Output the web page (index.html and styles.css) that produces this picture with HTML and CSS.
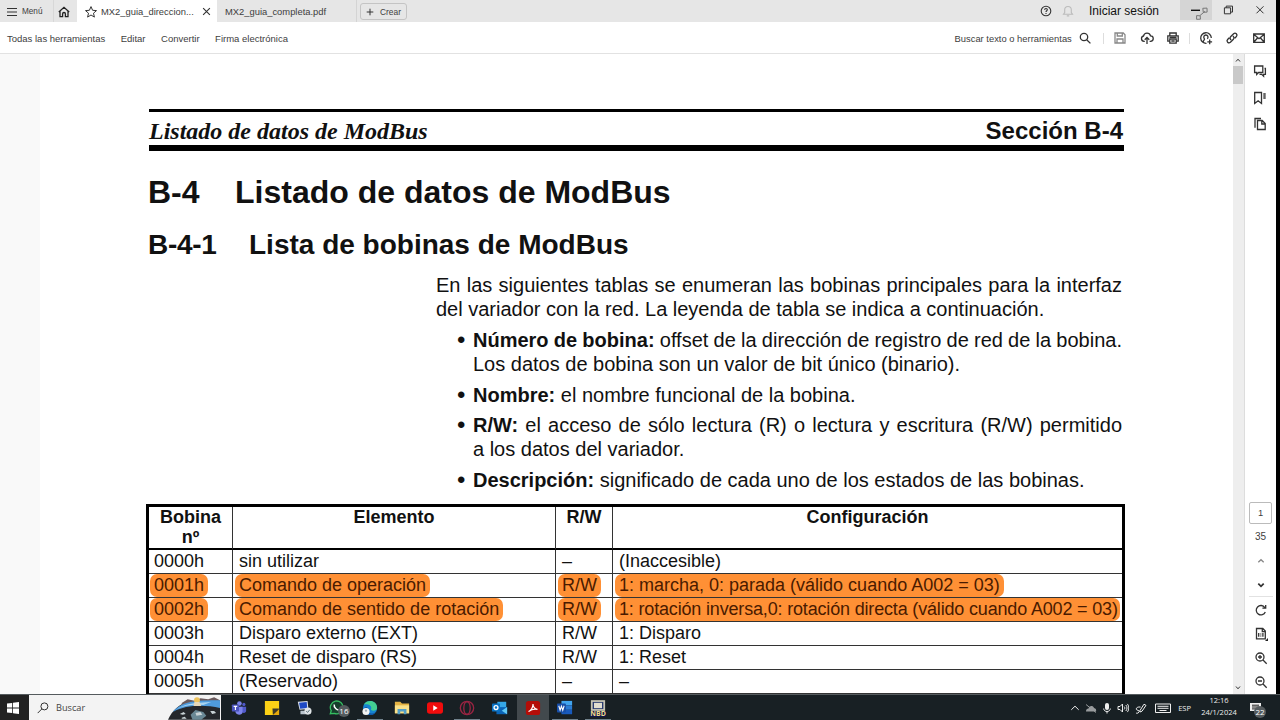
FILE: index.html
```html
<!DOCTYPE html>
<html lang="es">
<head>
    <meta charset="UTF-8">
    <title>MX2_guia_direcciones.pdf</title>
    <link rel="stylesheet" href="styles.css">
</head>
<body>
    <div class="viewer">
        <!-- Tabs and window buttons -->
        <div class="titlebar">
            <div class="menu">
                <svg class="burger" viewBox="0 0 10 10"><path d="M0 1.5h10M0 5h10M0 8.5h10"/></svg>
                <span>Menú</span>
            </div>
            <div class="home">
                <svg class="icon" viewBox="0 0 14 14"><path d="M1.8 7 7 2.3 12.2 7M3 6.2v5.5h2.6V8.900a1.400 1.400 0 0 1 2.800 0v2.800H11V6.200"/></svg>
            </div>
            <div class="tab active">
                <svg class="icon star" viewBox="0 0 14 14"><path d="M7 1.6 8.6 5.3l3.9.3-3 2.6.9 3.9L7 10l-3.4 2.1.9-3.9-3-2.6 3.9-.3z"/></svg>
                <span class="name">MX2_guia_direccion...</span>
                <svg class="tab-close" viewBox="0 0 8 8"><path d="M1 1l6 6M7 1 1 7"/></svg>
            </div>
            <div class="tab"><span>MX2_guia_completa.pdf</span></div>
            <div class="create"><svg viewBox="0 0 8 8"><path d="M4 .7v6.6M.7 4h6.6"/></svg>Crear</div>

            <div class="account">
                <svg class="icon" viewBox="0 0 14 14"><circle cx="7" cy="7" r="4.8"/><path d="M5.6 5.9C5.7 4 8.5 4.2 8.3 5.9 8.2 6.7 7 6.8 7 7.9M7 9.1v.9"/></svg>
                <svg class="icon pale" viewBox="0 0 14 14"><path d="M2.5 10.3h9L10.3 8.6V5.8a3.3 3.3 0 0 0-6.6 0v2.8zM5.8 11.9h2.4"/></svg>
                <span>Iniciar sesión</span>
            </div>
            <div class="win-btn hover">
                <svg viewBox="0 0 32 22"><path class="dash" d="M11 10.3h9"/><path class="cursor" d="M20 15.5 25 11.3M16.6 15.6l3.6.2.2 3.4-3.8.1zM22.8 8.3l4.2-.2.1 4-3.8.2z"/></svg>
            </div>
            <div class="win-btn"><svg viewBox="0 0 32 22"><path d="M12.4 7.8h6.2v6H12.4zM14.2 7.8V6.1h6.3v6h-1.9"/></svg></div>
            <div class="win-btn"><svg viewBox="0 0 32 22"><path d="M12.5 6.3l7 7M19.5 6.3l-7 7"/></svg></div>
        </div>

        <div class="toolbar">
            <span>Todas las herramientas</span>
            <span>Editar</span>
            <span>Convertir</span>
            <span>Firma electrónica</span>
            <div class="tools">
                <span>Buscar texto o herramientas</span>
                <svg class="icon search" viewBox="0 0 14 14"><circle cx="6" cy="6" r="3.7"/><path d="M8.7 8.7l3.7 3.7"/></svg>
                <i></i>
                <svg class="icon grey" viewBox="0 0 14 14"><path d="M2 2h8.3L12 3.7V12H2zM4.3 2v3h5V2M4 12V8h6v4"/></svg>
                <svg class="icon" viewBox="0 0 14 14"><path d="M4.8 10.3H4a2.7 2.7 0 0 1-.5-5.3 3.6 3.6 0 0 1 7-.2 2.7 2.7 0 0 1 0 5.5h-.9M7 13V6.6M4.7 8.8 7 6.5l2.3 2.3"/></svg>
                <svg class="icon" viewBox="0 0 14 14"><path d="M3.8 4.5V2h6.4v2.5M3.5 10.2H1.8V4.8h10.4v5.4h-1.7M3.8 8h6.4v4.2H3.8zM3.5 6.4h7M5.3 10h3.4"/></svg>
                <i></i>
                <svg class="icon" viewBox="0 0 14 14"><path d="M7.500 12.300A5.300 5.300 0 1 1 12.300 7M4.200 10.800c.2-1.500 1.200-1.800 1.300-2.600C4 6.200 5 4 6.900 4s2.800 1.900 1.500 3.800M10.700 8.500v4.800M8.300 10.900h4.800"/></svg>
                <svg class="icon" viewBox="0 0 14 14"><path d="M6.200 8.900C4.700 7.800 4.800 6.500 5.800 5.500L8.600 2.700c1.900-1.700 4.500.9 2.800 2.800L9.700 7.200M7.800 5.100c1.500 1.100 1.400 2.400.4 3.400l-2.800 2.800c-1.900 1.700-4.500-.9-2.800-2.800L4.300 6.800"/></svg>
                <svg class="icon" viewBox="0 0 14 14"><path d="M1.700 3h10.600v8.300H1.700zM2 3.400l5 4.300 5-4.300M2 11l3.500-4M12 11 8.500 7"/></svg>
            </div>
        </div>

        <div class="workspace">
            <div class="page">
                <div class="page-header">
                    <em>Listado de datos de ModBus</em>
                    <strong>Sección B-4</strong>
                </div>
                <h1><span>B-4</span>Listado de datos de ModBus</h1>
                <h2><span>B-4-1</span>Lista de bobinas de ModBus</h2>
                <div class="intro">
                    <p class="line">En las siguientes tablas se enumeran las bobinas principales para la interfaz</p>
                    <p>del variador con la red. La leyenda de tabla se indica a continuación.</p>
                    <ul>
                        <li><p class="line tight"><b>Número de bobina:</b> offset de la dirección de registro de red de la bobina.</p><p>Los datos de bobina son un valor de bit único (binario).</p></li>
                        <li><p><b>Nombre:</b> el nombre funcional de la bobina.</p></li>
                        <li><p class="line"><b>R/W:</b> el acceso de sólo lectura (R) o lectura y escritura (R/W) permitido</p><p>a los datos del variador.</p></li>
                        <li><p><b>Descripción:</b> significado de cada uno de los estados de las bobinas.</p></li>
                    </ul>
                </div>
                <table>
                    <colgroup><col class="c-num"><col class="c-elem"><col class="c-rw"><col class="c-conf"></colgroup>
                    <tr><th>Bobina<br>nº</th><th>Elemento</th><th>R/W</th><th>Configuración</th></tr>
                    <tr><td>0000h</td><td>sin utilizar</td><td>–</td><td>(Inaccesible)</td></tr>
                    <tr><td><mark>0001h</mark></td><td><mark>Comando de operación</mark></td><td><mark>R/W</mark></td><td><mark>1: marcha, 0: parada (válido cuando A002 = 03)</mark></td></tr>
                    <tr><td><mark>0002h</mark></td><td><mark>Comando de sentido de rotación</mark></td><td><mark>R/W</mark></td><td><mark class="long">1: rotación inversa,0: rotación directa (válido cuando A002 = 03)</mark></td></tr>
                    <tr><td>0003h</td><td>Disparo externo (EXT)</td><td>R/W</td><td>1: Disparo</td></tr>
                    <tr><td>0004h</td><td>Reset de disparo (RS)</td><td>R/W</td><td>1: Reset</td></tr>
                    <tr><td>0005h</td><td>(Reservado)</td><td>–</td><td>–</td></tr>
                </table>
            </div>

            <div class="scrollbar">
                <svg viewBox="0 0 10 10"><path d="M3 6.500 5 4.200l2 2.300"/></svg>
                <div class="thumb"></div>
                <svg class="down" viewBox="0 0 10 10"><path d="M3 3.500 5 5.800l2-2.300"/></svg>
            </div>

            <div class="rail">
                <div class="panels">
                    <svg class="icon" viewBox="0 0 14 14"><path d="M1.600 2h8.200v6.500H5.600L3.700 10.400V8.500H1.600zM11.500 4.500h.9v5.900h-1.800v1.800l-1.900-1.800H6.500"/></svg>
                    <svg class="icon" viewBox="0 0 14 14"><path d="M1.700 1.500h6.800v11L5.100 9.800l-3.400 2.700zM10.300 3h2.400M10.300 5h2.400M10.300 7h2.400"/></svg>
                    <svg class="icon" viewBox="0 0 14 14"><path d="M4.500 3.500h4.700l3 3v6H4.500zM8.800 3.500V7h3.400M2 10.800V1.500h6"/></svg>
                </div>
                <div class="nav">
                    <div class="current">1</div>
                    <div class="total">35</div>
                    <svg class="icon grey" viewBox="0 0 14 14"><path d="M4.300 8.300 7 5.700l2.700 2.600"/></svg>
                    <svg class="icon thick" viewBox="0 0 14 14"><path d="M4.300 5.700 7 8.300l2.700-2.600"/></svg>
                    <hr>
                    <svg class="icon" viewBox="0 0 14 14"><path d="M10.800 4.500A4.700 4.700 0 1 0 11.300 9M11.700 2v3.200H8.400"/></svg>
                    <svg class="icon" viewBox="0 0 14 14"><path d="M2.500 1.500h6.300l2.500 2.500v7.800H2.500zM8.300 2v2.700h2.900M4.700 6v3.700M8.900 6v3.700M6.800 6.500v.9M6.800 8.500v.9"/><path class="solid" d="M14 11v3h-3z"/></svg>
                    <svg class="icon" viewBox="0 0 14 14"><circle cx="6" cy="6" r="4"/><path d="M9 9l3.700 3.700M4 6h4M6 4v4"/></svg>
                    <svg class="icon" viewBox="0 0 14 14"><circle cx="6" cy="6" r="4"/><path d="M9 9l3.700 3.700M4 6h4"/></svg>
                </div>
            </div>
        </div>
    </div>

    <!-- Windows taskbar -->
    <div class="taskbar">
        <div class="start"><svg viewBox="0 0 12 12"><path d="M0 1.600 5.200.9v4.700H0zM6 .8 12 0v5.600H6zM0 6.400h5.200v4.700L0 10.400zM6 6.400h6V12l-6-.8z"/></svg></div>
        <div class="searchbox">
            <svg class="lens" viewBox="0 0 12 12"><circle cx="7.400" cy="4.400" r="3.500"/><path d="M4.900 6.900.7 11.100"/></svg>
            <span>Buscar</span>
            <svg class="art" viewBox="0 0 54 25">
                <path fill="#25272b" d="M0 25C4 16 12 8 21 7L53 6v19z"/>
                <path fill="#6b5a5c" d="M14 8l6-4 8 2 5-3 8 1 6-2 6 3v5H14z"/>
                <path fill="#4f9bdc" d="M5 17C13 6 29 5 53 5v8C38 10 20 9 5 17z"/>
                <path fill="#a9d4f1" d="M9 14C21 7 32 8 44 7L36 10C25 9 18 10 9 14z"/>
                <circle fill="#edc25b" cx="29.500" cy="5" r="3"/>
                <path fill="#e5d7b9" d="M27 7h5l2 4h-8z"/>
                <path fill="#6a8895" d="M23 20l5-5 8 2 3 4-5 4h-9z"/>
                <path fill="#c9d2d5" d="M28 18l5-1 2 3-6 1zM12 19l4-2 2 2-3 1zM43 16l4 0 2 2-4 1zM14 23l3-1 2 2h-5z"/>
            </svg>
        </div>
        <div class="apps">
            <div class="app"><svg viewBox="0 0 18 18"><circle fill="#7b83eb" cx="9.500" cy="4" r="2.600"/><circle fill="#5059c9" cx="14.500" cy="5" r="1.800"/><path fill="#5059c9" d="M11 7.500h6v5c0 2-3 3-5 1z"/><path fill="#7b83eb" d="M5 7.500h8v6c0 4-7 4-8 0z"/><rect fill="#4b53bc" x="1" y="5" width="8" height="8" rx="1"/><path stroke="#fff" stroke-width="1.300" d="M3 7.200h4M5 7.200v4"/></svg></div>
            <div class="app"><svg viewBox="0 0 18 18"><path fill="#fcd116" d="M1 1h16v9h-6.500v7H1z"/><path fill="#3d3a2a" d="M9.500 9.500H17L10 17z"/><path fill="#e3a70c" d="M17 10v7h-7z"/></svg></div>
            <div class="app"><svg viewBox="0 0 18 18"><path fill="#dde4ed" d="M2 2l11-1 1 9-10 1z"/><path fill="#1d49c5" d="M3.500 3l8.500-.7.700 6.700-8 .8z"/><path fill="#bac4cd" d="M5 12h6l2 4H5z"/><circle fill="#e1e5e8" cx="13.500" cy="12.500" r="4"/><path stroke="#49616b" fill="none" d="M11.500 12.500l1.500 1.500 2.500-3"/></svg></div>
            <div class="app"><svg viewBox="0 0 18 18"><path fill="#153e2b" stroke="#35bd61" stroke-width="1.500" d="M1.500 15.500 2.500 12A7.200 7.200 0 1 1 6 15z"/><path fill="none" stroke="#fff" stroke-width="1.700" d="M6 5c-1 3 3 7 6 6"/></svg><span class="badge">16</span></div>
            <div class="app open"><svg viewBox="0 0 18 18"><circle fill="#1683d1" cx="9" cy="9" r="8"/><path fill="#43cf92" d="M2 5C6-1 17 0 17 9c0 3-5 4-7 2 2-5-3-7-8-6z"/><path fill="#0f57a8" d="M6 8c-2 6 4 9 9 6-2 4-9 4-12 0C1 10 3 7 6 8z"/><circle fill="#f3f3f3" cx="4.500" cy="13" r="4"/><circle fill="#a1aeb8" cx="4.500" cy="12" r="1.300"/></svg></div>
            <div class="app"><svg viewBox="0 0 18 18"><path fill="#e4b344" d="M1 2h6l2 2h8v11H1z"/><path fill="#fae18a" d="M1 6h16v9H1z"/><path fill="#539ec6" d="M4 10h10v6h-3v-3H7v3H4z"/></svg></div>
            <div class="app"><svg viewBox="0 0 18 18"><rect fill="#f10c0c" y="2.500" width="18" height="13" rx="3"/><path fill="#fff" d="M7 6l5 3-5 3z"/></svg></div>
            <div class="app open"><svg viewBox="0 0 18 18"><circle fill="none" stroke="#992442" stroke-width="1.500" cx="9" cy="9" r="7.500"/><ellipse fill="none" stroke="#992442" stroke-width="1.500" cx="9" cy="9" rx="3.600" ry="7"/></svg></div>
            <div class="app"><svg viewBox="0 0 18 18"><path fill="#35a8e7" d="M6 2h10v8H6z"/><path fill="#0a65b8" d="M5 8h12v8H5z"/><path fill="#61c9f5" d="M17 8v8l-6-4z"/><rect fill="#0872c5" y="4" width="9" height="9" rx="1"/><circle fill="none" stroke="#fff" stroke-width="1.500" cx="4.500" cy="8.500" r="2.200"/></svg></div>
            <div class="app current-app"><svg viewBox="0 0 18 18"><rect fill="#b40d08" x="1" y="1" width="16" height="16" rx="3"/><path fill="none" stroke="#fff" stroke-width="1.300" d="M4 13C7 12 9 8 9 4.500c0 3 2 6 5 6-3-.6-7 .2-10 2.500z"/></svg></div>
            <div class="app open"><svg viewBox="0 0 18 18"><path fill="#41a5ee" d="M5 1h12v5H5z"/><path fill="#2b7cd3" d="M5 6h12v5H5z"/><path fill="#185abd" d="M5 11h12v5H5z"/><rect fill="#174ea8" y="4" width="10" height="10" rx="1"/><path fill="none" stroke="#fff" stroke-width="1.200" d="M2 6.500l1.500 5L5 7l1.500 4.500 1.500-5"/></svg></div>
            <div class="app open nbd"><svg viewBox="0 0 18 12"><rect fill="#c6c4b4" x="1" width="16" height="12"/><rect fill="#293b70" x="3" y="2" width="12" height="8"/><rect fill="#e2ded0" x="4.500" y="3" width="9" height="6"/></svg><b>NBD</b></div>
        </div>
        <div class="tray">
            <svg viewBox="0 0 12 12"><path d="M2.300 7.800 6 4.200l3.700 3.600"/></svg>
            <svg class="dim" viewBox="0 0 12 12"><path class="fill" d="M1 9.500c0-2 1-3 2.500-3C4 3.500 8 3 9 6c2 .4 2.500 2 2 3.500z"/><path d="M1 2.500l10 8"/></svg>
            <svg viewBox="0 0 12 12"><rect class="fill" x="4" y="1" width="4" height="7" rx="2"/><path d="M2.700 6.500c0 4 6.600 4 6.600 0M6 9.500v2"/></svg>
            <svg viewBox="0 0 12 12"><path d="M1 4.500h2L5.500 2v8L3 7.500H1zM7.200 4.600c.8.900.8 2 0 2.800M8.800 3c1.600 1.800 1.600 4.200 0 6M10.300 1.900c2 2.500 2 5.700 0 8.200"/></svg>
            <svg class="pen" viewBox="0 0 12 12"><path d="M5 8.500 9 2.200l2 1.200L7 9.200l-2 .8zM5.500 5C2 4.500 0 7 2 8s3 0 2 2-3 1-3 1"/></svg>
            <svg class="keyboard" viewBox="0 0 18 12"><path d="M1.500 2h15v8.500h-15zM3.500 4.300h11M3.500 6.300h11M5.500 8.500h7"/></svg>
            <span>ESP</span>
            <div class="clock">12:16<br>24/1/2024</div>
            <div class="notices"><svg viewBox="0 0 12 12"><path class="fill" d="M0 1h11v8H7l-2.500 2V9H0z"/><path class="rows" d="M2 3.200h7M2 5h7M2 6.900h5"/></svg><span class="badge">22</span></div>
        </div>
    </div>
</body>
</html>
```

FILE: styles.css
```css
* {
    box-sizing: border-box;
}

body {
    margin: 0;
    width: 1280px;
    height: 720px;
    overflow: hidden;
    background-color: #000;
    font-family: "Liberation Sans", Arial, sans-serif;
    color: #111;
}

svg {
    display: block;
    flex: none;
    fill: none;
    stroke: #333;
    stroke-width: 1;
}

p, h1, h2, ul {
    margin: 0;
    padding: 0;
}

.icon {
    width: 14px;
    height: 14px;
    stroke-width: 1.3;
}

.icon.pale {
    stroke: #bbb;
}

.icon.grey {
    stroke: #888;
}

.icon.thick {
    stroke-width: 1.8;
}

.icon .solid {
    fill: #222;
    stroke: none;
}

.viewer {
    width: 1276px;
    height: 694px;
    overflow: hidden;
    background-color: #fff;
    font-size: 9.4px;
    color: #404040;
}

/* Title bar */
.titlebar {
    display: flex;
    height: 22px;
    background-color: #e6e6e6;
}

.menu {
    display: flex;
    align-items: center;
    gap: 5px;
    width: 54px;
    padding: 1px 0 0 7px;
    font-size: 8.2px;
    border-right: 1px solid #d8d8d8;
}

.burger {
    width: 10px;
    height: 10px;
}

.home {
    width: 23px;
    padding: 5px 0 0 3px;
}

.home .icon {
    stroke: #222;
}

.tab {
    display: flex;
    align-items: center;
    width: 140px;
    height: 22px;
    padding: 1px 0 0 8px;
    border-right: 1px solid #d4d4d4;
}

.tab.active {
    padding-left: 7px;
    background-color: #fff;
    border-right: none;
}

.tab .name {
    width: 101px;
    margin-left: 3px;
}

.star {
    stroke-width: 1;
}

.tab-close {
    width: 9px;
    height: 9px;
}

.create {
    display: flex;
    align-items: center;
    gap: 6px;
    width: 47px;
    height: 17px;
    margin: 3px 0 0 3px;
    padding-left: 5px;
    border: 1px solid #c4c4c4;
    border-radius: 3px;
    font-size: 8.4px;
}

.create svg {
    width: 8px;
    height: 8px;
}

.account {
    display: flex;
    align-items: center;
    margin-left: auto;
    margin-right: 21px;
    font-size: 12px;
    color: #111;
}

.account .icon {
    stroke-width: 1.1;
}

.account .pale {
    margin: 0 14px 0 8px;
}

.win-btn {
    width: 32px;
    height: 22px;
}

.win-btn.hover {
    height: 20px;
    background-color: #d5d5d5;
}

.win-btn svg {
    width: 32px;
    height: 22px;
}

.dash {
    stroke: #111;
    stroke-width: 1.4;
}

.cursor {
    stroke: #777;
}

/* Toolbar */
.toolbar {
    display: flex;
    align-items: center;
    gap: 15.5px;
    height: 32px;
    padding: 1px 10px 0 7px;
    border-bottom: 1px solid #e2e2e2;
    font-size: 9.5px;
}

.tools {
    display: flex;
    align-items: center;
    gap: 12.7px;
    margin-left: auto;
    font-size: 9.4px;
}

.tools .search {
    margin-left: -7px;
}

.tools i {
    width: 1px;
    height: 11px;
    margin: 0 -4px;
    background-color: #ddd;
}

.tools i:first-of-type {
    margin: 0 -4px 0 -1px;
}

.workspace {
    display: flex;
    height: 640px;
    padding-left: 40px;
    background-color: #f9f9f9;
}

/* PDF page */
.page {
    width: 1193px;
    height: 640px;
    padding: 55px 0 0 106px;
    overflow: hidden;
    background-color: #fff;
    color: #111;
}

.page-header {
    display: flex;
    justify-content: space-between;
    align-items: center;
    width: 975px;
    height: 42px;
    margin-left: 3px;
    padding: 5px 1px 0 0;
    border-top: 3px solid #000;
    border-bottom: 6px solid #000;
    font-size: 24px;
}

.page-header em {
    font-family: "Liberation Serif", "Times New Roman", serif;
    font-weight: bold;
}

h1 {
    display: flex;
    margin: 23px 0 0 2px;
    font-size: 32px;
    line-height: 36px;
}

h1 span {
    width: 87px;
}

h2 {
    display: flex;
    margin: 19px 0 0 2px;
    font-size: 28px;
    line-height: 32px;
}

h2 span {
    width: 101px;
    letter-spacing: -0.3px;
}

.intro {
    width: 686px;
    margin: 12px 0 0 290px;
    font-size: 20px;
    line-height: 24.4px;
    white-space: nowrap;
}

/* Full lines run out to the right margin */
.line {
    text-align: justify;
    text-align-last: justify;
}

.line.tight {
    word-spacing: -0.4px;
}

.intro ul {
    list-style: none;
}

.intro li {
    position: relative;
    margin-top: 6px;
    padding-left: 37px;
}

.intro li::before {
    content: "•";
    position: absolute;
    left: 21px;
    font-size: 24px;
}

table {
    width: 979px;
    margin-top: 12px;
    table-layout: fixed;
    border: 3px solid #000;
    border-bottom: none;
    border-spacing: 0;
    font-size: 18px;
    line-height: 20px;
}

.c-num {
    width: 84px;
}

.c-elem {
    width: 323px;
}

.c-rw {
    width: 57px;
}

th {
    height: 43px;
    padding: 0;
    vertical-align: top;
    border-right: 1px solid #333;
    border-bottom: 2px solid #000;
}

td {
    height: 24px;
    padding: 0 0 2px 6px;
    border-right: 1px solid #333;
    border-bottom: 1px solid #333;
    white-space: nowrap;
}

td:first-child {
    padding-left: 5px;
}

th:last-child, td:last-child {
    border-right: none;
}

mark {
    display: block;
    width: max-content;
    height: 23px;
    margin: 0 -4px -2px;
    padding: 1px 4px;
    border-radius: 7px;
    background-color: #ff9035;
    color: #4a1b00;
}

mark.long {
    letter-spacing: -0.17px;
    padding-right: 2px;
}

/* Scrollbar and right rail */
.scrollbar {
    display: flex;
    flex-direction: column;
    width: 11px;
    background-color: #eee;
}

.scrollbar svg {
    width: 10px;
    height: 12px;
}

.thumb {
    width: 10px;
    height: 18px;
    background-color: #c9c9c9;
}

.scrollbar .down {
    margin-top: auto;
}

.rail {
    display: flex;
    flex-direction: column;
    justify-content: space-between;
    width: 32px;
    padding: 10px 0 5px;
    border-left: 1px solid #ddd;
    background-color: #fff;
}

.panels, .nav {
    display: flex;
    flex-direction: column;
    align-items: center;
}

.panels {
    gap: 12.5px;
    padding-right: 2px;
}

.nav .icon {
    margin-bottom: 10px;
}

.nav .icon:last-child {
    margin-bottom: 0;
}

.current {
    width: 23px;
    height: 22px;
    border: 1px solid #bbb;
    border-radius: 2px;
    line-height: 20px;
    text-align: center;
}

.total {
    margin: 7px 0 12px;
    font-size: 10px;
    line-height: 11px;
}

.nav .thick {
    margin-bottom: 4px;
}

.nav hr {
    width: 24px;
    margin: 0 0 6px;
    border: none;
    border-top: 1px solid #e2e2e2;
}

/* Taskbar */
.taskbar {
    display: flex;
    height: 26px;
    border-top: 1px solid #555b5e;
    background-color: #182024;
    font-family: "Open Sans", sans-serif;
    color: #eee;
}

.taskbar svg {
    stroke: none;
}

.start {
    width: 29px;
    padding: 7px 0 0 7px;
    background-color: #222;
}

.start svg {
    width: 12px;
    height: 12px;
    fill: #fff;
}

.searchbox {
    display: flex;
    align-items: center;
    width: 192px;
    padding-left: 8px;
    background-color: #f3f3f3;
    font-size: 9.2px;
    color: #444;
}

.searchbox span {
    width: 112px;
    margin-left: 7px;
}

.taskbar .lens {
    width: 12px;
    height: 12px;
    stroke: #333;
}

.art {
    width: 53px;
    height: 25px;
}

.apps {
    display: flex;
    padding-left: 2px;
}

.app {
    position: relative;
    width: 32.65px;
    padding: 5px 0 0 8px;
}

.app svg {
    width: 16px;
    height: 16px;
}

.app.open::after {
    content: "";
    position: absolute;
    left: 3px;
    bottom: 0;
    width: 26px;
    height: 1px;
    background-color: #71828c;
}

.current-app {
    background-color: #42494d;
}

.badge {
    position: absolute;
    width: 12px;
    height: 12px;
    border-radius: 50%;
    background-color: #555b5e;
    font-size: 8px;
    line-height: 12px;
    text-align: center;
    color: #fff;
}

.app .badge {
    left: 17px;
    top: 10px;
}

.nbd svg {
    height: 11px;
}

.nbd b {
    display: block;
    width: 16px;
    font-size: 7px;
    line-height: 6px;
    text-align: center;
    color: #f0dc8c;
    background-color: #10164a;
}

.tray {
    display: flex;
    align-items: center;
    margin-left: auto;
    padding-right: 12px;
    font-size: 7.5px;
}

.tray svg {
    width: 12px;
    height: 12px;
    margin-right: 4px;
    stroke: #eee;
}

.tray .fill {
    fill: #eee;
    stroke: none;
}

.tray .dim {
    opacity: 0.6;
}

.tray .pen {
    margin-left: 2px;
}

.tray .keyboard {
    width: 18px;
    margin: 0 6px 0 3px;
}

.clock {
    width: 44px;
    margin: 0 9px 2px 6px;
    line-height: 11.5px;
    text-align: center;
}

.notices {
    position: relative;
    width: 18px;
}

.tray .rows {
    stroke: #222;
}

.notices .badge {
    left: 4px;
    top: 4px;
}
```
